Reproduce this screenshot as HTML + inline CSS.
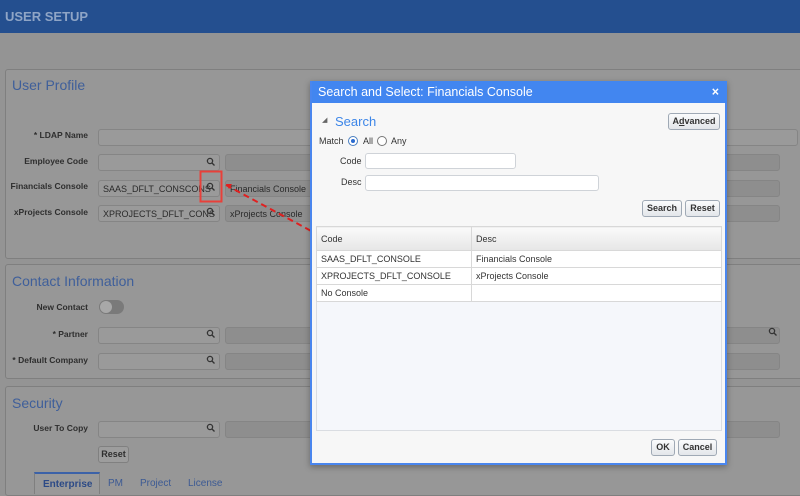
<!DOCTYPE html>
<html><head><meta charset="utf-8"><style>
*{box-sizing:border-box;margin:0;padding:0}
body{width:800px;height:493px;overflow:hidden;background:#949494;font-family:"Liberation Sans",Arial,sans-serif;position:relative}
.a{position:absolute}
.hdr{left:0;top:0;width:800px;height:33px;background:#244f8f;color:#8fa5c6;font-weight:bold;font-size:13px;padding:9px 5px}
.panel{left:5px;width:800px;background:#979797;border:1px solid #7f7f7f;border-radius:3px}
.ttl{color:#3f5f9a;font-size:14px}
.lbl{font-size:8.5px;font-weight:bold;color:#2e2e2e;text-align:right;width:88px;left:0;white-space:nowrap}
.inp{height:17px;border:1px solid #858585;border-radius:3px;background:#9a9a9a;font-size:9px;color:#2a2a2a;padding:3px 4px;white-space:nowrap;overflow:hidden}
.ro{background:#8e8e8e}
.dlg{left:310px;top:81px;width:417px;height:384px;background:#f7f7f7;border:2px solid #4a86ee;border-top:none;box-shadow:0 2px 6px rgba(0,0,0,.3)}
.dt{left:0;top:0;width:415px;height:22px;background:#4286f0;color:#fff;font-size:12.5px;padding:4px 6px}
.btn{height:17px;border:1px solid #9fa9b5;border-radius:3px;background:linear-gradient(#fafbfc,#e3e6ea);font-size:9px;font-weight:bold;color:#333;text-align:center;line-height:15px}
.di{height:16px;background:#fff;border:1px solid #cfd3d8;border-radius:3px}
.dl{font-size:9px;color:#333}
table{border-collapse:collapse;font-size:9px;color:#333}
td{border:1px solid #d8d8d8;height:17px;padding:0 4px;background:#fff}
</style></head><body>
<div class="a hdr">USER SETUP</div>

<div class="a panel" style="top:69px;height:190px"></div>
<div class="a ttl" style="left:12px;top:77px">User Profile</div>
<div class="a lbl" style="top:130px">* LDAP Name</div>
<div class="a inp" style="left:98px;top:129px;width:700px"></div>
<div class="a lbl" style="top:156px">Employee Code</div>
<div class="a inp" style="left:98px;top:154px;width:122px"></div>
<div class="a inp ro" style="left:225px;top:154px;width:555px"></div>
<div class="a lbl" style="top:181px">Financials Console</div>
<div class="a inp" style="left:98px;top:180px;width:122px">SAAS_DFLT_CONSCONS</div>
<div class="a inp ro" style="left:225px;top:180px;width:555px">Financials Console</div>
<div class="a lbl" style="top:207px">xProjects Console</div>
<div class="a inp" style="left:98px;top:205px;width:122px">XPROJECTS_DFLT_CONS</div>
<div class="a inp ro" style="left:225px;top:205px;width:555px">xProjects Console</div>

<div class="a panel" style="top:264px;height:115px"></div>
<div class="a ttl" style="left:12px;top:273px">Contact Information</div>
<div class="a lbl" style="top:302px">New Contact</div>
<div class="a" style="left:99px;top:300px;width:25px;height:14px;border-radius:7px;background:#7a7a7a"><div class="a" style="left:1px;top:1px;width:12px;height:12px;border-radius:6px;background:#a8a8a8"></div></div>
<div class="a lbl" style="top:329px">* Partner</div>
<div class="a inp" style="left:98px;top:327px;width:122px"></div>
<div class="a inp ro" style="left:225px;top:327px;width:555px"></div>
<div class="a lbl" style="top:355px">* Default Company</div>
<div class="a inp" style="left:98px;top:353px;width:122px"></div>
<div class="a inp ro" style="left:225px;top:353px;width:555px"></div>

<div class="a panel" style="top:386px;height:110px"></div>
<div class="a ttl" style="left:12px;top:395px">Security</div>
<div class="a lbl" style="top:423px">User To Copy</div>
<div class="a inp" style="left:98px;top:421px;width:122px"></div>
<div class="a inp ro" style="left:225px;top:421px;width:555px"></div>
<div class="a btn" style="left:98px;top:446px;width:31px;background:#9d9d9d;border-color:#808080;color:#2e2e2e">Reset</div>
<div class="a" style="left:34px;top:472px;width:66px;height:22px;border:1px solid #7f7f7f;border-top:2px solid #3c62a8;border-bottom:none;background:#999;font-size:10px;font-weight:bold;color:#2c4a86;padding:5px 8px">Enterprise</div>
<div class="a" style="left:108px;top:478px;font-size:10px;color:#3c5a94">PM</div>
<div class="a" style="left:140px;top:478px;font-size:10px;color:#3c5a94">Project</div>
<div class="a" style="left:188px;top:478px;font-size:10px;color:#3c5a94">License</div>

<svg class="a" style="left:0;top:0" width="800" height="493">
<g fill="none" stroke="#333" stroke-width="1.3">
<circle cx="210" cy="161" r="2.6"/><path d="M212 163l2.5 2.5"/>
<circle cx="210" cy="186" r="2.6"/><path d="M212 188l2.5 2.5"/>
<circle cx="210" cy="211" r="2.6"/><path d="M212 213l2.5 2.5"/>
<circle cx="210" cy="333" r="2.6"/><path d="M212 335l2.5 2.5"/>
<circle cx="210" cy="359" r="2.6"/><path d="M212 361l2.5 2.5"/>
<circle cx="210" cy="427" r="2.6"/><path d="M212 429l2.5 2.5"/>
<circle cx="772" cy="331" r="2.6"/><path d="M774 333l2.5 2.5"/>
</g>
<rect x="200.5" y="171.5" width="21" height="30" fill="none" stroke="#e8403a" stroke-width="2"/>
<path d="M226 185L313 232" stroke="#e02020" stroke-width="2" stroke-dasharray="6,4"/>
<path d="M226 184l6 0-3 5z" fill="#e02020"/>
</svg>

<div class="a dlg">
<div class="a dt">Search and Select: Financials Console<span style="position:absolute;right:8px;top:4px;font-weight:bold">×</span></div>
<div class="a" style="left:10px;top:35px;font-size:7px;color:#666">◢</div>
<div class="a" style="left:23px;top:33px;font-size:13px;color:#3d86e8">Search</div>
<div class="a btn" style="left:356px;top:32px;width:52px">A<u>d</u>vanced</div>
<div class="a dl" style="left:7px;top:55px">Match</div>
<div class="a" style="left:36px;top:55px;width:10px;height:10px;border-radius:50%;border:1px solid #4a7fc0;background:#fff"><div class="a" style="left:2px;top:2px;width:4px;height:4px;border-radius:50%;background:#2a6bd0"></div></div>
<div class="a dl" style="left:51px;top:55px">All</div>
<div class="a" style="left:65px;top:55px;width:10px;height:10px;border-radius:50%;border:1px solid #777;background:#fff"></div>
<div class="a dl" style="left:79px;top:55px">Any</div>
<div class="a dl" style="left:28px;top:75px">Code</div>
<div class="a di" style="left:53px;top:72px;width:151px"></div>
<div class="a dl" style="left:29px;top:96px">Desc</div>
<div class="a di" style="left:53px;top:94px;width:234px"></div>
<div class="a btn" style="left:330px;top:119px;width:40px">Search</div>
<div class="a btn" style="left:373px;top:119px;width:35px">Reset</div>
<div class="a" style="left:4px;top:145px;width:406px;height:205px;background:#f5f7fb;border:1px solid #dadde2"></div>
<table class="a" style="left:4px;top:145px;width:406px">
<tr><td style="height:24px;background:linear-gradient(#fafafa,#e6e6e6);width:155px">Code</td><td style="background:linear-gradient(#fafafa,#e6e6e6)">Desc</td></tr>
<tr><td>SAAS_DFLT_CONSOLE</td><td>Financials Console</td></tr>
<tr><td>XPROJECTS_DFLT_CONSOLE</td><td>xProjects Console</td></tr>
<tr><td>No Console</td><td></td></tr>
</table>
<div class="a btn" style="left:339px;top:358px;width:24px">OK</div>
<div class="a btn" style="left:366px;top:358px;width:39px">Cancel</div>
</div>
</body></html>
